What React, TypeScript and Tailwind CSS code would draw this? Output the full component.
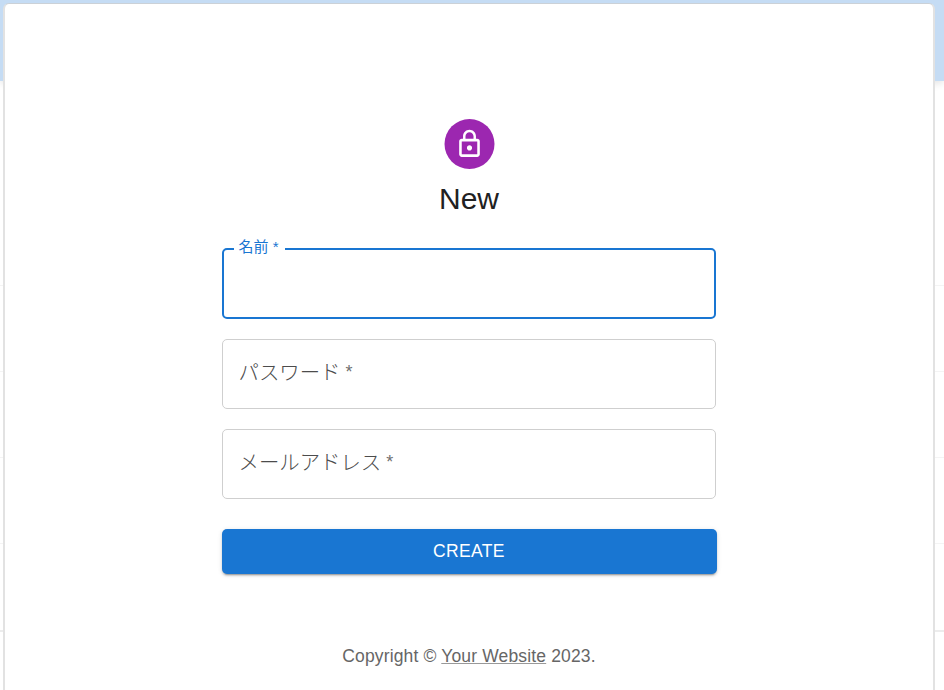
const Backdrop = () => {
  return (
    <div className="h-[690px] bg-white">
      <div className="h-[81px] bg-[#c5dcf4] shadow-[0_2px_8px_rgba(0,0,0,0.12)]" />
      <div className="h-[205px] border-b border-[#f4f4f4]" />
      <div className="h-[86px] border-b border-[#f4f4f4]" />
      <div className="h-[86px] border-b border-[#f4f4f4]" />
      <div className="h-[86px] border-b border-[#f4f4f4]" />
      <div className="h-[88px] border-b-2 border-[#ececec]" />
    </div>
  );
};

const LockIcon = () => {
  return (
    <svg viewBox="0 0 24 24" className="size-[31px]" fill="currentColor">
      <path d="M12 17c1.100 0 2-.9 2-2s-.9-2-2-2-2 .9-2 2 .9 2 2 2zm6-9h-1V6c0-2.760-2.240-5-5-5S7 3.240 7 6v2H6c-1.100 0-2 .9-2 2v10c0 1.100.9 2 2 2h12c1.100 0 2-.9 2-2V10c0-1.100-.9-2-2-2zM8.900 6c0-1.710 1.390-3.100 3.100-3.100s3.100 1.390 3.100 3.100v2H8.900V6zM18 20H6V10h12v10z" />
    </svg>
  );
};

type FieldProps = {
  label: string;
};

const Field = ({ label }: FieldProps) => {
  return (
    <div className="flex h-[70px] items-center rounded-[5px] border border-[#cfcfcf] px-4 pb-0.5 text-[20.400px] font-light text-[#4c4c4c]">
      <label className="whitespace-pre">
        {label}
        <span className="inline-block -translate-y-0.5 text-[18px] text-[#707070]"> *</span>
      </label>
    </div>
  );
};

const App = () => {
  return (
    <div className="relative h-[690px] w-[944px] overflow-hidden font-['Liberation_Sans','Noto_Sans_CJK_JP',sans-serif]">
      <Backdrop />
      <div className="absolute top-[3px] left-[3px] h-[720px] w-[932px] rounded-md border-2 border-t border-[#e2e2e2] border-t-[#cbd1d7] bg-white">
        <div className="mx-auto flex w-[495px] flex-col pt-[115px]">
          <div className="flex size-[50px] translate-x-[0.500px] items-center justify-center self-center rounded-full bg-[#9c27b0] text-white">
            <div className="-translate-x-[0.500px] -translate-y-[0.500px]">
              <LockIcon />
            </div>
          </div>
          <h1 className="mt-[10px] text-center text-[30px] leading-10 text-[#212121]">
            New
          </h1>
          <form className="mt-[21px] flex flex-col">
            <fieldset className="h-[79px] w-[494px] rounded-[5px] border-2 border-[#1976d2] pl-[10px]">
              <legend className="px-[5px] pr-[6px] text-[15px] leading-[18px] whitespace-pre text-[#1976d2]">
                <span className="inline-block -translate-y-0.5">名前 *</span>
              </legend>
            </fieldset>
            <div className="mt-5 flex w-[494px] flex-col gap-5">
              <Field label="パスワード" />
              <Field label="メールアドレス" />
            </div>
            <button
              type="button"
              className="mt-[30px] h-[45px] rounded-[5px] bg-[#1976d2] text-[17.500px] tracking-[0.350px] text-white shadow-[0_3px_1px_-2px_rgba(0,0,0,0.2),0_2px_2px_0_rgba(0,0,0,0.14),0_1px_5px_0_rgba(0,0,0,0.12)]"
            >
              CREATE
            </button>
          </form>
          <p className="mt-[70px] text-center text-[17.500px] leading-[25px] tracking-[0.150px] text-[#666666]">
            Copyright ©{" "}
            <a href="#" className="underline decoration-[#999999]">
              Your Website
            </a>{" "}
            2023.
          </p>
        </div>
      </div>
    </div>
  );
};

export default App;
